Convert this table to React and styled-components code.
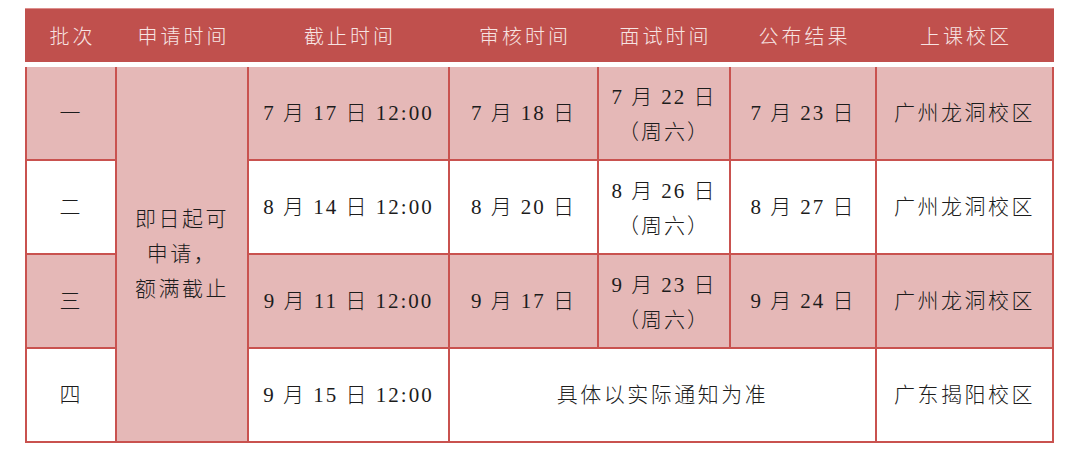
import React from 'react';
import styled, { createGlobalStyle } from 'styled-components';

const GlobalStyle = createGlobalStyle`
  html, body { margin: 0; padding: 0; background: #fff; }
  body { font-family: "Liberation Serif", "Noto Sans CJK SC", serif; }
`;

const COLS = '88px 130px 199px 147px 130px 144px 175px';
const RED = '#c0504d';
const LINE = '#c9524f';
const PINK = '#e5b8b7';

const Page = styled.div`
  padding: 8px 0 0 25px;
`;

const Header = styled.div`
  width: 1029px;
  box-sizing: border-box;
  height: 54px;
  display: grid;
  grid-template-columns: ${COLS};
  column-gap: 2px;
  padding: 0 2px;
  background: ${RED};
  border-top: 1px solid #dd8f8d;
  margin-bottom: 5px;
`;

const HeadCell = styled.div`
  display: flex;
  align-items: center;
  justify-content: center;
  color: #f7e4e3;
  font-size: 20px;
  font-weight: 300;
  letter-spacing: 3px;
  padding-left: 3px;
`;

const Body = styled.div`
  width: 1029px;
  box-sizing: border-box;
  display: grid;
  grid-template-columns: ${COLS};
  grid-template-rows: repeat(4, 92px);
  gap: 2px;
  padding: 0 2px 2px 2px;
  background: ${LINE};
`;

const Cell = styled.div`
  display: flex;
  flex-direction: column;
  align-items: center;
  justify-content: center;
  background: ${p => (p.$pink ? PINK : '#fff')};
  grid-column: ${p => p.$col || 'auto'};
  grid-row: ${p => p.$row || 'auto'};
  color: #1c1c1c;
  font-size: 21px;
  font-weight: 300;
  line-height: 35px;
  letter-spacing: ${p => (p.$wide ? '2.5px' : '2px')};
  padding-top: ${p => (p.$two ? '3px' : '0')};
  white-space: pre;
  text-align: center;
`;

const heads = ['批次', '申请时间', '截止时间', '审核时间', '面试时间', '公布结果', '上课校区'];

const rows = [
  { no: '一', end: '7 月 17 日 12:00', review: '7 月 18 日', interview: '7 月 22 日', result: '7 月 23 日', campus: '广州龙洞校区' },
  { no: '二', end: '8 月 14 日 12:00', review: '8 月 20 日', interview: '8 月 26 日', result: '8 月 27 日', campus: '广州龙洞校区' },
  { no: '三', end: '9 月 11 日 12:00', review: '9 月 17 日', interview: '9 月 23 日', result: '9 月 24 日', campus: '广州龙洞校区' },
];

const App = () => (
  <>
    <GlobalStyle />
    <Page>
      <Header>
        {heads.map(h => <HeadCell key={h}>{h}</HeadCell>)}
      </Header>
      <Body>
        {rows.map((r, i) => {
          const pink = i % 2 === 0;
          const row = i + 1;
          return (
            <React.Fragment key={r.no}>
              <Cell $pink={pink} $row={row} $col={1}>{r.no}</Cell>
              {i === 0 && (
                <Cell $pink $row="1 / span 4" $col={2} $wide>
                  <span>即日起可</span>
                  <span>申请，</span>
                  <span>额满截止</span>
                </Cell>
              )}
              <Cell $pink={pink} $row={row} $col={3}>{r.end}</Cell>
              <Cell $pink={pink} $row={row} $col={4}>{r.review}</Cell>
              <Cell $pink={pink} $row={row} $col={5} $two>
                <span>{r.interview}</span>
                <span>（周六）</span>
              </Cell>
              <Cell $pink={pink} $row={row} $col={6}>{r.result}</Cell>
              <Cell $pink={pink} $row={row} $col={7} $wide>{r.campus}</Cell>
            </React.Fragment>
          );
        })}
        <Cell $row={4} $col={1}>四</Cell>
        <Cell $row={4} $col={3}>9 月 15 日 12:00</Cell>
        <Cell $row={4} $col="4 / span 3" $wide>具体以实际通知为准</Cell>
        <Cell $row={4} $col={7} $wide>广东揭阳校区</Cell>
      </Body>
    </Page>
  </>
);

export default App;
